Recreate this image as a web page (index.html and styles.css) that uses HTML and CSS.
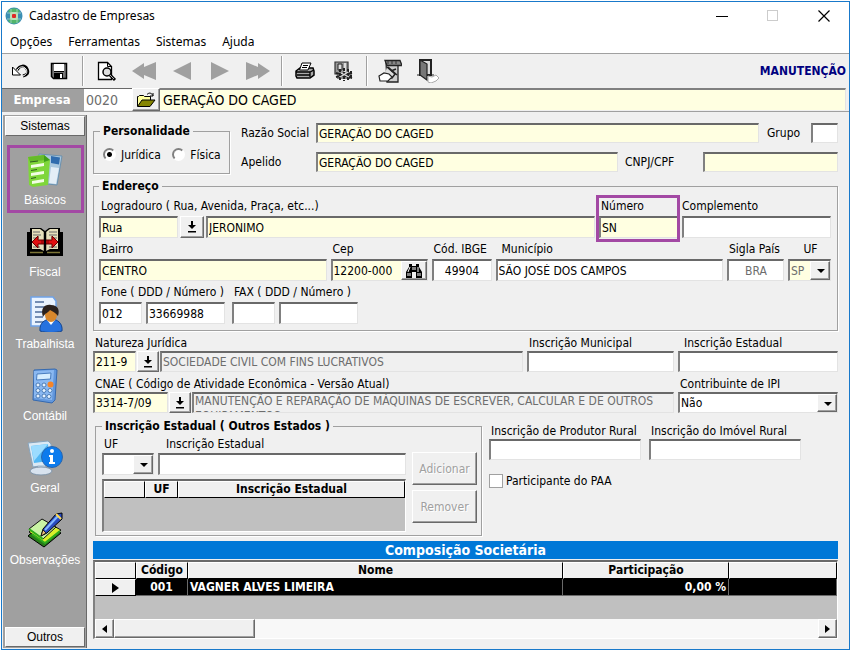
FILE: index.html
```html
<!DOCTYPE html>
<html lang="pt-BR">
<head>
<meta charset="utf-8">
<title>Cadastro de Empresas</title>
<link rel="stylesheet" href="styles.css">
</head>
<body>
<div class="window">
  <header class="titlebar">
    <svg class="app-icon" viewBox="0 0 18 18"><circle cx="9" cy="9" r="8.500" fill="#3c8fb4"/><path d="M3 4a8 8 0 0 1 12 0L12 7H6zM3 14a8 8 0 0 0 12 0l-3-3H6z" fill="#52b56a"/><path d="M6 2v14M12 2v14M2 6h14M2 12h14" stroke="#a8d8c8" stroke-width=".8"/><rect x="5" y="5" width="8" height="8" rx="2" fill="#b9e0b8"/><rect x="7" y="7" width="4" height="4" rx="1" fill="#e02828"/></svg>
    <h1>Cadastro de Empresas</h1>
    <div class="caption-buttons">
      <button type="button" aria-label="Minimizar"><svg viewBox="0 0 12 12"><path d="M0 6.500h12" stroke="#000" fill="none"/></svg></button>
      <button type="button" aria-label="Maximizar" disabled><svg viewBox="0 0 12 12"><rect x=".5" y=".5" width="10" height="10" stroke="#ccc" fill="none"/></svg></button>
      <button type="button" aria-label="Fechar"><svg viewBox="0 0 12 12"><path d="M.5.5l11 11M11.500.5l-11 11" stroke="#000" stroke-width="1.200" fill="none"/></svg></button>
    </div>
  </header>
  <nav class="menubar">
    <button type="button">Opções</button><button type="button">Ferramentas</button><button type="button">Sistemas</button><button type="button">Ajuda</button>
  </nav>
  <div class="toolbar">
    <button type="button" aria-label="Desfazer"><svg viewBox="0 0 24 24"><path d="M8 11c3-5 8-5 10-1 2 4 0 6-4 7" fill="none" stroke="#000" stroke-width="3"/><path d="M8 11c3-4 7-4 9-1 2 3 0 6-3 7" fill="none" stroke="#fff" stroke-width="1"/><path d="M3.500 8v8h8z" fill="#fff" stroke="#000"/></svg></button>
    <button type="button" aria-label="Salvar"><svg viewBox="0 0 24 24"><path d="M4.500 4.500h15v15h-13l-2-2z" fill="#777" stroke="#000" stroke-width="1.500"/><path d="M7 5h10v7H7z" fill="#fff"/><path d="M7 12.500h10" stroke="#000"/><path d="M7 14h9v5H7z" fill="#000"/><path d="M13 15h2v4h-2z" fill="#fff"/></svg></button>
    <i class="separator"></i>
    <button type="button" aria-label="Visualizar"><svg viewBox="0 0 24 24"><path d="M4.500 3.500h9l4 4v13h-13z" fill="#fff" stroke="#000" stroke-width="1.300"/><path d="M13.500 3.500v4h4" fill="none" stroke="#000"/><circle cx="13" cy="13" r="4" fill="#ddd" stroke="#000" stroke-width="1.500"/><path d="M16 16l5 5" stroke="#000" stroke-width="3"/><path d="M16 16l4 4" stroke="#aaa"/></svg></button>
    <button type="button" aria-label="Primeiro"><svg viewBox="0 0 24 24"><path d="M0 12L12 4v4l12-5v18l-12-5v4z" fill="#a0a0a0"/></svg></button>
    <button type="button" aria-label="Anterior"><svg viewBox="0 0 24 24"><path d="M3 12L21 3v18z" fill="#a0a0a0"/></svg></button>
    <button type="button" aria-label="Próximo"><svg viewBox="0 0 24 24"><path d="M21 12L3 3v18z" fill="#a0a0a0"/></svg></button>
    <button type="button" aria-label="Último"><svg viewBox="0 0 24 24"><path d="M24 12L12 4v4L0 3v18l12-5v4z" fill="#a0a0a0"/></svg></button>
    <i class="separator"></i>
    <button type="button" aria-label="Imprimir"><svg viewBox="0 0 24 24"><path d="M3 12l4-3h13l1 3v4l-4 3H4l-1-2z" fill="#aaa" stroke="#000" stroke-width="1.500"/><path d="M6.500 11l2.500-7h9l-3 7z" fill="#fff" stroke="#000"/><path d="M10 6.500h5M9 8.500h5" stroke="#000"/><path d="M3 13h14l4-2M4 16h13M17 13v5" stroke="#000" stroke-width="1.300" fill="none"/></svg></button>
    <button type="button" aria-label="Configurar"><svg viewBox="0 0 24 24"><path d="M4 3h13v12H4z" fill="#999" stroke="#333" stroke-width="1.200"/><path d="M7 5h4v6H7z" fill="#ddd" stroke="#222"/><path d="M14 4v9" stroke="#ddd" stroke-width="2"/><path d="M6 13h15v7H6z" fill="#888"/><path d="M9 10v11M13 9v13M17 10v11M20 12v8M5 18l16-4M5 14l16 5" stroke="#222" stroke-width="2" stroke-dasharray="3 1"/><path d="M10 14l8 4M9 18l8-5" stroke="#ddd" stroke-width="1.300"/></svg></button>
    <i class="separator"></i>
    <button type="button" aria-label="Agenda"><svg viewBox="0 0 24 24"><path d="M8 3h12v20H9z" fill="#ccc" stroke="#222" stroke-width="1.300"/><path d="M7 1.500h15l2 5H9z" fill="#888" stroke="#222" stroke-width="1.300"/><path d="M10 2v3M14 2v3M18 2v3" stroke="#333"/><path d="M9 8l8 7-3 4H9l-4 2" fill="#ddd" stroke="#222" stroke-width="1.500"/><path d="M1 17l5-3 5 1 3 3-4 4H2z" fill="#fff" stroke="#222" stroke-width="1.200"/><path d="M10 8l9 8M13 12l5-2" stroke="#222" stroke-width="1.500"/></svg></button>
    <button type="button" aria-label="Sair"><svg viewBox="0 0 24 24"><path d="M4 1h11v15H4z" fill="#ddd" stroke="#222" stroke-width="2"/><path d="M4 1l7 4v16l-7-5z" fill="#777" stroke="#222" stroke-width="1.200"/><path d="M1 16h3M15 16h3" stroke="#222"/><path d="M12 17l4 1 4-2 3 3-3 3-5 2-3-1z" fill="#fff" stroke="#aaa"/></svg></button>
    <strong class="mode">MANUTENÇÃO</strong>
  </div>
  <div class="company">
    <label for="empresa">Empresa</label>
    <input id="empresa" class="company-code" value="0020">
    <button type="button" class="raised" aria-label="Abrir empresa"><svg viewBox="0 0 20 16"><path d="M1.500 14V4.500h1l1-1h4l1 1h6V8" fill="#ffff9c" stroke="#000"/><path d="M1.500 14.500L6 8h13l-5 6.500z" fill="#848400" stroke="#000"/><path d="M11 2.500c2-2 4-2 6 1M17 1v3h-3" fill="none" stroke="#000"/></svg></button>
    <input class="company-name" aria-label="Nome da empresa" value="GERAÇÃO DO CAGED">
  </div>
  <div class="body">
    <aside class="sidebar">
      <button type="button" class="side-tab">Sistemas</button>
      <nav class="side-list">
        <a href="#" class="current"><svg viewBox="0 0 36 36"><path d="M12 2l23 2-5 29-20-2z" fill="#a9c8df" stroke="#6c91ae"/><path d="M24 4l9 1.500-1 7-8-1.500z" fill="#2f6cae"/><path d="M24 15l8 1-3 16-7-1z" fill="#e3eef7"/><path d="M1 5l16-2 6 5-2 25-15 2-4-2z" fill="#7fd63a"/><path d="M1 5l16-2 1 5-15 2z" fill="#66bb2a"/><path d="M17 3l6 5-6 2z" fill="#3f9f1a"/><path d="M4 13l13-2v3L4 16zM4 21l13-2v3L4 24zM5 29l12-2v3L5 32z" fill="#f2fde4"/><path d="M3 10l8-1M4 18.500l6-1M4 26.500l5-1" stroke="#2f5e1e"/></svg>Básicos</a>
        <a href="#"><svg viewBox="0 0 36 36"><path d="M0 8h3V4h11l4 3 4-3h11v4h3v24H0z" fill="#000"/><path d="M5 5h8l4 3v19l-4-2H5zM31 5h-8l-4 3v19l4-2h8z" fill="#e6e0bb"/><path d="M6 8h7M6 11h8M6 14h6M6 23h7M22 8h8M22 11h8M24 14h6M22 23h8" stroke="#666"/><path d="M3 28.500h13M20 28.500h13" stroke="#7c7536" stroke-width="1.500"/><path d="M5 18l6-6v4h14v-4l6 6-6 6v-4H11v4z" fill="#e01010" stroke="#600"/><path d="M18 7v22" stroke="#000" stroke-width="2.500"/><path d="M15 16v4M21 16v4" stroke="#700" stroke-width="1"/></svg>Fiscal</a>
        <a href="#"><svg viewBox="0 0 36 36"><path d="M4 1h22l3 4v25H4z" fill="#e9f3ff" stroke="#6fa2e8" stroke-width="1.500"/><path d="M8 6h9M8 11h13M8 16h9M8 21h8M8 26h8" stroke="#4f6e9c" stroke-width="1.500"/><path d="M13 35c-1-8 5-12 11-12s12 4 11 12c-7 2-15 2-22 0z" fill="#2672df" stroke="#15468f"/><path d="M20 24l4 5 4-5-1-3h-6z" fill="#fff"/><ellipse cx="24" cy="19" rx="6" ry="7" fill="#d8872b"/><path d="M16 21c-3-9 2-13 8-12 7 0 9 5 7 11-2-3-6-5-8-6-2 3-5 3-7 7z" fill="#2b221e"/></svg>Trabalhista</a>
        <a href="#"><svg viewBox="0 0 36 36"><path d="M7 2l21-1 2 1-2 30-3 3-19-3z" fill="#6297dc" stroke="#3569af"/><path d="M7 3l20-1-2 30-18-2z" fill="#8ab8f1"/><path d="M10 6l14-1-.5 6-14 1z" fill="#d6edff" stroke="#497dbf"/><g fill="#e6f3ff" stroke="#3467a6" stroke-width=".8"><circle cx="11" cy="17" r="2"/><circle cx="17" cy="17" r="2"/><circle cx="11" cy="22.500" r="2"/><circle cx="17" cy="22.500" r="2"/><circle cx="23" cy="22.500" r="2"/><circle cx="11" cy="28" r="2"/><circle cx="17" cy="28" r="2"/><circle cx="22" cy="28.500" r="2"/></g><circle cx="23.500" cy="16.500" r="3" fill="#f58428"/></svg>Contábil</a>
        <a href="#"><svg viewBox="0 0 36 36"><path d="M1 3l20-2 3 3 1 20-19 3z" fill="#dbe9f4" stroke="#87a4bd"/><path d="M4 6l17-2 1 17-15 2z" fill="#53b8f4"/><path d="M4 6l17-2-14 17z" fill="#9cdcff"/><path d="M11 25h7l1 5h-8z" fill="#b9cedf"/><ellipse cx="14" cy="31" rx="11" ry="4" fill="#d8e3ef" stroke="#8297ac"/><circle cx="25" cy="17" r="10.500" fill="#0c7bed" stroke="#2865ae"/><circle cx="25" cy="11" r="2" fill="#fff"/><path d="M22 15h4v7h2v2h-6v-2h1v-5h-1z" fill="#fff"/></svg>Geral</a>
        <a href="#"><svg viewBox="0 0 36 36"><path d="M1 24l14-13 19 10-17 14z" fill="#267b18" stroke="#000"/><path d="M2 20l14-12 18 10-16 13z" fill="#d9f02a" stroke="#111"/><path d="M2 17L15 7l14 8-13 12z" fill="#c9f3a4" stroke="#111"/><path d="M2 17l14 10M5 22l13 9 15-12" fill="none" stroke="#2fae1d" stroke-width="2"/><path d="M14 24l2-7L29 2l6-1v6L20 21z" fill="#284bc0" stroke="#000"/><path d="M18 18L31 4" stroke="#83b9ff" stroke-width="2"/><path d="M29 2l5 5" stroke="#ffdb54" stroke-width="2"/><path d="M14 24l2-6 3 3z" fill="#edc07a" stroke="#000" stroke-width=".7"/></svg>Observações</a>
      </nav>
      <button type="button" class="side-tab">Outros</button>
    </aside>
    <main>
      <div class="identity">
        <fieldset class="person">
          <legend>Personalidade</legend>
          <input type="radio" name="pessoa" id="juridica" checked><label for="juridica">Jurídica</label>
          <input type="radio" name="pessoa" id="fisica"><label for="fisica">Física</label>
        </fieldset>
        <div class="identity-fields">
          <div class="inline-row">
            <label class="lead" for="razao">Razão Social</label><input id="razao" class="req grow" value="GERAÇÃO DO CAGED">
            <label class="grupo-label" for="grupo">Grupo</label><input id="grupo" class="w-grupo">
          </div>
          <div class="inline-row">
            <label class="lead" for="apelido">Apelido</label><input id="apelido" class="req grow" value="GERAÇÃO DO CAGED">
            <label class="cnpj-label" for="cnpj">CNPJ/CPF</label><input id="cnpj" class="req w-cnpj">
          </div>
        </div>
      </div>

      <fieldset class="address">
        <legend>Endereço</legend>
        <div class="row">
          <div class="field grow">
            <label for="tipo">Logradouro ( Rua, Avenida, Praça, etc...)</label>
            <div class="controls"><input id="tipo" class="req w-79" value="Rua"><button type="button" class="raised drop" aria-label="Escolher tipo de logradouro"><svg viewBox="0 0 10 12"><path d="M4 0h2v4h3L5 8 1 4h3zM1 10h8v1.500H1z"/></svg></button><input class="req grow" aria-label="Nome do logradouro" value="JERONIMO"></div>
          </div>
          <div class="field w-79 marked"><label for="numero">Número</label><input id="numero" class="req" value="SN"></div>
          <div class="field w-149"><label class="flush" for="complemento">Complemento</label><input id="complemento"></div>
        </div>
        <div class="row">
          <div class="field grow"><label for="bairro">Bairro</label><input id="bairro" class="req" value="CENTRO"></div>
          <div class="field w-97"><label for="cep">Cep</label><div class="lookup"><input id="cep" class="req" value="12200-000"><button type="button" class="raised" aria-label="Buscar CEP"><svg viewBox="0 0 18 14"><path d="M4 0h3v2h4V0h3v3l3 5v6h-6V8H7v6H1V8l3-5z"/><path d="M5 3L3 8M13 3v5M8 3v3M10 3v3" stroke="#fff"/><path d="M3 9v3M5 9v3M13 9v3M15 9v3" stroke="#fff"/></svg></button></div></div>
          <div class="field w-60"><label for="ibge">Cód. IBGE</label><input id="ibge" class="center" value="49904"></div>
          <div class="field grow"><label class="inset" for="municipio">Município</label><input id="municipio" value="SÃO JOSÉ DOS CAMPOS"></div>
          <div class="field w-57"><label for="pais">Sigla País</label><input id="pais" class="center dim" value="BRA"></div>
          <div class="field w-43"><label class="center" for="uf">UF</label><div class="select"><select id="uf" class="req dim"><option>SP</option></select></div></div>
        </div>
        <div class="row phones">
          <div class="field"><label for="ddd">Fone ( DDD / Número )</label><div class="controls"><input id="ddd" class="w-43" value="012"><input class="w-79" aria-label="Número do fone" value="33669988"></div></div>
          <div class="field"><label for="fax">FAX ( DDD / Número )</label><div class="controls"><input id="fax" class="w-43"><input class="w-79" aria-label="Número do FAX"></div></div>
        </div>
      </fieldset>

      <div class="row tight">
        <div class="field grow"><label for="natureza">Natureza Jurídica</label><div class="controls code"><input id="natureza" class="req w-43" value="211-9"><button type="button" class="raised drop" aria-label="Escolher natureza jurídica"><svg viewBox="0 0 10 12"><path d="M4 0h2v4h3L5 8 1 4h3zM1 10h8v1.500H1z"/></svg></button><input class="readonly grow" aria-label="Descrição da natureza jurídica" readonly value="SOCIEDADE CIVIL COM FINS LUCRATIVOS"></div></div>
        <div class="field w-147"><label for="im">Inscrição Municipal</label><input id="im"></div>
        <div class="field w-160"><label class="inset" for="ie">Inscrição Estadual</label><input id="ie"></div>
      </div>
      <div class="row tight">
        <div class="field grow"><label for="cnae">CNAE ( Código de Atividade Econômica - Versão Atual)</label><div class="controls code"><input id="cnae" class="req w-75" value="3314-7/09"><button type="button" class="raised drop" aria-label="Escolher CNAE"><svg viewBox="0 0 10 12"><path d="M4 0h2v4h3L5 8 1 4h3zM1 10h8v1.500H1z"/></svg></button><textarea class="readonly grow" aria-label="Descrição do CNAE" readonly rows="1">MANUTENÇÃO E REPARAÇÃO DE MÁQUINAS DE ESCREVER, CALCULAR E DE OUTROS
EQUIPAMENTOS</textarea></div></div>
        <div class="field w-160"><label for="ipi">Contribuinte de IPI</label><div class="select"><select id="ipi"><option>Não</option><option>Sim</option></select></div></div>
      </div>

      <div class="lower">
        <fieldset class="other-states">
          <legend>Inscrição Estadual ( Outros Estados )</legend>
          <div class="states-data">
            <div class="row">
              <div class="field w-52"><label for="uf2">UF</label><div class="select"><select id="uf2"><option></option></select></div></div>
              <div class="field grow"><label class="far" for="ie2">Inscrição Estadual</label><input id="ie2"></div>
            </div>
            <div class="grid-box">
              <table class="grid states"><colgroup><col class="c-mark"><col class="c-uf"><col></colgroup><thead><tr><th></th><th>UF</th><th>Inscrição Estadual</th></tr></thead></table>
            </div>
          </div>
          <div class="actions"><button type="button" class="raised" disabled>Adicionar</button><button type="button" class="raised" disabled>Remover</button></div>
        </fieldset>
        <div class="rural">
          <div class="row tight">
            <div class="field w-152"><label for="produtor">Inscrição de Produtor Rural</label><input id="produtor"></div>
            <div class="field w-152"><label for="imovel">Inscrição do Imóvel Rural</label><input id="imovel"></div>
          </div>
          <div class="check"><input type="checkbox" id="paa"><label for="paa">Participante do PAA</label></div>
        </div>
      </div>

      <section class="partners">
        <h2>Composição Societária</h2>
        <div class="grid-box">
          <table class="grid">
            <colgroup><col class="c-mark"><col class="c-code"><col><col class="c-part"><col class="c-rest"></colgroup>
            <thead><tr><th></th><th>Código</th><th>Nome</th><th>Participação</th><th></th></tr></thead>
            <tbody><tr><th><i class="pointer"></i></th><td class="mid">001</td><td>VAGNER ALVES LIMEIRA</td><td class="num">0,00 %</td><td></td></tr></tbody>
          </table>
          <div class="scrollbar"><button type="button" class="raised" aria-label="Rolar à esquerda"><i class="left"></i></button><span class="thumb raised"></span><button type="button" class="raised end" aria-label="Rolar à direita"><i class="right"></i></button></div>
        </div>
      </section>
    </main>
  </div>
</div>
</body>
</html>
```
FILE: styles.css
```css
* { box-sizing: border-box; }
body { margin: 0; padding: 1px; background: #fff; color: #000; font: 12px/14px "DejaVu Sans Condensed", "DejaVu Sans", sans-serif; }
button, input, select, textarea { font: inherit; color: inherit; margin: 0; border-radius: 0; }
button { padding: 0; border: 0; background: none; }
svg { display: block; flex: none; }
label { white-space: nowrap; }

.window { display: flex; flex-direction: column; min-height: calc(100vh - 2px); border: 1px solid #1979ca; background: #f0f0f0; }

.titlebar { display: flex; align-items: center; height: 28px; padding-left: 3px; background: #fff; font-family: "Noto Sans", sans-serif; }
.app-icon { width: 18px; height: 18px; }
h1 { flex: 1; margin: 0 0 0 6px; font-size: 12px; font-weight: 400; }
.caption-buttons { display: flex; }
.caption-buttons button { display: grid; place-items: center; width: 51px; height: 28px; }
.caption-buttons svg { width: 12px; height: 12px; }

.menubar { display: flex; gap: 16px; height: 24px; padding: 0 8px; background: #fff; border-bottom: 1px solid #a0a0a0; font: 12px/14px "Noto Sans", sans-serif; }

.toolbar { display: flex; align-items: center; height: 34px; }
.toolbar button { display: grid; place-items: center; width: 38px; height: 34px; }
.toolbar svg { width: 24px; height: 24px; }
.separator { width: 9px; height: 30px; background: linear-gradient(90deg, transparent 4px, #a0a0a0 4px 5px, #fff 5px 6px, transparent 6px); }
.mode { margin-left: auto; padding-right: 3px; color: #000080; }

.company { display: flex; height: 24px; border-bottom: 1px solid #a0a0a0; font-size: 14px; }
.company label { width: 82px; padding-right: 2px; background: #a0a0a0; border-top: 1px solid #696969; color: #fff; font-size: 13px; font-weight: 700; line-height: 22px; text-align: center; }
.company .company-code { width: 48px; height: 22px; padding: 0 2px; border: 0; border-top: 1px solid #696969; background: #fff; color: #6d6d6d; }
.company button { display: grid; place-items: center; width: 28px; }
.company button svg { width: 20px; height: 16px; }
.company .company-name { flex: 1; min-width: 0; height: 22px; margin-right: 3px; padding: 0 3px; border: 0; border-top: 2px solid #808080; border-right: 1px solid #e3e3e3; background: #ffffe1; }

.raised { background: #f0f0f0; border: 1px solid; border-color: #fff #696969 #696969 #fff; box-shadow: inset -1px -1px #a0a0a0; }

.body { flex: 1; display: flex; }
.sidebar { display: flex; flex-direction: column; width: 84px; margin: 3px 0 1px 1px; padding: 1px; background: #a0a0a0; border-left: 1px solid #a0a0a0; border-right: 1px solid #696969; font-family: "Liberation Sans", sans-serif; }
.side-tab { height: 20px; background: #f0f0f0; border: 1px solid; border-color: #fff #696969 #696969 #fff; }
.side-list { flex: 1; padding-top: 9px; }
.side-list a { position: relative; display: flex; flex-direction: column; align-items: center; gap: 4px; height: 72px; padding-top: 7px; color: #fff; line-height: 16px; text-decoration: none; }
.side-list svg { width: 36px; height: 36px; }
.side-list .current::after { content: ""; position: absolute; inset: 0 1px 4px 2px; border: 3px solid #a349a4; }

main { flex: 1; min-width: 0; display: flex; flex-direction: column; padding: 11px 11px 10px 6px; }

main input:not([type=radio], [type=checkbox]), select, textarea { display: block; height: 22px; padding: 0 1px; background: #fff; border: 1px solid; border-width: 2px 1px 1px 2px; border-color: #696969 #e3e3e3 #e3e3e3 #808080; outline: 0; }
main .req:not([type=radio], [type=checkbox]) { background: #ffffe1; }
main .readonly:not([type=radio]) { padding: 0 1px; background: #f0f0f0; color: #6d6d6d; }
textarea { resize: none; overflow: hidden; white-space: pre; line-height: 15px; }
main .center { text-align: center; }
main .dim { color: #6d6d6d; }
main .grow { flex: 1; min-width: 0; }

fieldset { min-width: 0; margin: 0; padding: 0; border: 1px solid #a0a0a0; box-shadow: 1px 1px #fff; }
legend { padding: 0 3px; font-weight: 700; line-height: 16px; }

.identity { display: flex; gap: 11px; }
.person { width: 137px; height: 51px; white-space: nowrap; padding: 8px 0 0 6px; }
.person input { margin-left: 3px; }
.person label { margin: 0 5px 0 5px; vertical-align: middle; }
.person input { appearance: none; width: 13px; height: 13px; border: 2px solid; border-color: #808080 #fff #fff #808080; border-radius: 50%; background: #fff; vertical-align: middle; }
.person input:checked { background: radial-gradient(#000 2px, #fff 3px); }
.identity-fields { flex: 1; min-width: 0; display: flex; flex-direction: column; gap: 9px; }
.inline-row { display: flex; align-items: center; }
main .inline-row input { height: 20px; }
.lead { width: 75px; }
.grupo-label { width: 52px; padding-left: 8px; }
.cnpj-label { width: 85px; padding-left: 7px; }
.w-grupo { width: 27px; }
.w-cnpj { width: 135px; }

.address { margin-top: 4px; padding: 5px 6px 6px 5px; }
.row { display: flex; gap: 4px; }
.address .row + .row { margin-top: 4px; }
.field { display: flex; flex-direction: column; gap: 3px; min-width: 0; }
.field > label { padding-left: 2px; }
.field > .flush { padding-left: 0; }
.field > .inset { padding-left: 6px; }
.field > .far { padding-left: 8px; }
.field > input, .select select { width: 100%; }
.controls { display: flex; gap: 2px; }
.w-43 { width: 43px; }
.w-52 { width: 52px; }
.w-57 { width: 57px; }
.w-60 { width: 60px; }
.w-75 { width: 75px; }
.w-79 { width: 79px; }
.w-97 { width: 97px; }
.w-147 { width: 147px; }
.w-149 { width: 149px; }
.w-152 { width: 152px; }
.w-160 { width: 160px; }
.drop { display: grid; place-items: center; width: 24px; }
.drop svg { width: 10px; height: 12px; }
.marked { position: relative; }
.marked::after { content: ""; position: absolute; inset: -4px -2px -4px -3px; border: 3px solid #a349a4; pointer-events: none; }
.phones { gap: 7px; }
.phones .controls { gap: 4px; }

.lookup { position: relative; }
.lookup input { width: 100%; }
.lookup button { position: absolute; top: 2px; right: 1px; bottom: 1px; display: grid; place-items: center; width: 26px; }
.lookup svg { width: 18px; height: 14px; }

.select { position: relative; }
select { appearance: none; }
.select::before { content: ""; position: absolute; top: 2px; right: 1px; bottom: 1px; width: 18px; background: #f0f0f0; border: 1px solid; border-color: #fff #696969 #696969 #fff; box-shadow: inset -1px -1px #a0a0a0; pointer-events: none; }
.select::after { content: ""; position: absolute; top: 10px; right: 6px; border: 4px solid transparent; border-top-color: #000; border-bottom: 0; pointer-events: none; }

.tight { margin-top: 5px; }
.tight .field { gap: 1px; }
main .tight .field input, main .tight select, main .tight textarea { height: 21px; }
.code { gap: 1px; }
.code .drop { width: 22px; }

.lower { display: flex; gap: 7px; margin-top: 5px; }
.other-states { flex: 1; margin-left: 2px; }
.other-states { display: flex; gap: 6px; padding: 3px 4px 3px 6px; }
.states-data { flex: 1; min-width: 0; }
.other-states .field { gap: 2px; }
.other-states .grid-box { height: 53px; margin-top: 4px; }
.actions { display: flex; flex-direction: column; gap: 5px; padding-top: 15px; }
.actions button { width: 65px; height: 33px; color: #a0a0a0; text-shadow: 1px 1px #fff; }
.rural { width: 349px; padding-top: 1px; }
.rural .row { gap: 8px; }
.check { display: flex; align-items: center; gap: 3px; margin-top: 14px; }
.check input { appearance: none; width: 14px; height: 14px; margin: 0; border: 1px solid #a0a0a0; background: #fff; }

.partners { flex: 1; display: flex; flex-direction: column; margin-top: 5px; }
h2 { margin: 0 0 1px; background: #0078d7; color: #fff; font-size: 14px; line-height: 18px; text-align: center; }
.grid-box { display: flex; flex-direction: column; background: #c0c0c0; border: 1px solid; border-width: 2px 1px 1px 2px; border-color: #696969 #fff #fff #808080; }
.partners .grid-box { flex: 1; }
.grid { width: 100%; table-layout: fixed; border-collapse: separate; border-spacing: 0; font-weight: 700; }
.grid th, .grid td { height: 17px; padding: 0; line-height: 15px; white-space: nowrap; overflow: hidden; }
.grid th { background: #f0f0f0; border-top: 1px solid #fff; border-left: 1px solid #fff; border-right: 1px solid #000; border-bottom: 1px solid #000; }
.grid td { padding: 0 2px; background: #000; color: #fff; border-right: 1px solid #696969; border-bottom: 1px solid #696969; }
.grid .mid { text-align: center; }
.grid .num { text-align: right; }
.c-mark { width: 41px; }
.c-uf { width: 33px; }
.c-code { width: 52px; }
.c-part { width: 166px; }
.c-rest { width: 108px; }
.pointer, .left, .right { display: inline-block; border: 5px solid transparent; border-left: 7px solid #000; border-right: 0; vertical-align: middle; }
.left { border-width: 4px; border-left: 0; border-right: 5px solid #000; }
.right { border-width: 4px; border-left: 5px solid #000; }
.scrollbar { display: flex; height: 19px; margin-top: auto; background: #f8f8f8; }
.scrollbar button { display: grid; place-items: center; width: 19px; }
.thumb { width: 141px; }
.end { margin-left: auto; }
```
